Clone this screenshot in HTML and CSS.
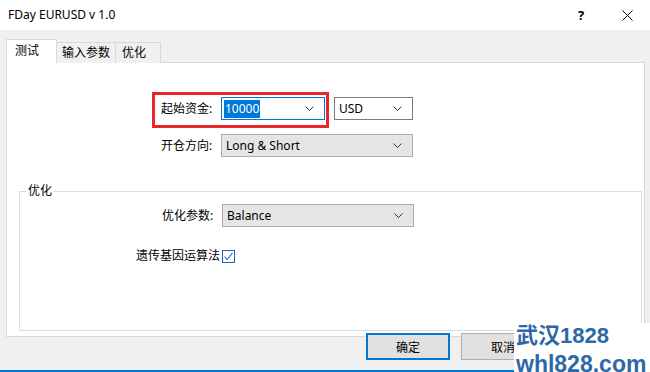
FILE: index.html
```html
<!DOCTYPE html>
<html lang="zh">
<head>
  <meta charset="UTF-8" />
  <meta name="viewport" content="width=device-width, initial-scale=1.0" />
  <title>FDay EURUSD v 1.0</title>
  <link rel="stylesheet" href="styles.css">
</head>
<body>

<header class="titlebar">
  <span class="judul">FDay EURUSD v 1.0</span>
  <span class="spacer"></span>
  <span class="title-btn">?</span>
  <span class="title-btn">
    <svg width="11" height="11" viewBox="0 0 11 11"><path d="M0.5 0.5 L10.5 10.5 M10.5 0.5 L0.5 10.5" stroke="#000" stroke-width="1" fill="none"/></svg>
  </span>
</header>

<main class="dialog">
  <ul class="tabs">
    <li class="tab aktif">测试</li>
    <li class="tab lebar">输入参数</li>
    <li class="tab">优化</li>
  </ul>

  <section class="panel">
    <div class="row row-modal">
      <div class="sorot">
        <span class="label">起始资金:</span>
        <div class="combo fokus w-104">
          <span class="pilih">10000</span>
          <svg class="panah" width="9" height="5" viewBox="0 0 9 5"><path d="M0.5 0.5 L4.5 4.5 L8.5 0.5" stroke="#333" fill="none"/></svg>
        </div>
      </div>
      <div class="combo putih w-79 usd">
        <span>USD</span>
        <svg class="panah" width="9" height="5" viewBox="0 0 9 5"><path d="M0.5 0.5 L4.5 4.5 L8.5 0.5" stroke="#333" fill="none"/></svg>
      </div>
    </div>

    <div class="row row-arah">
      <span class="label">开仓方向:</span>
      <div class="combo w-192">
        <span>Long &amp; Short</span>
        <svg class="panah" width="9" height="5" viewBox="0 0 9 5"><path d="M0.5 0.5 L4.5 4.5 L8.5 0.5" stroke="#333" fill="none"/></svg>
      </div>
    </div>

    <fieldset class="grup">
      <legend>优化</legend>
      <div class="row row-param">
        <span class="label">优化参数:</span>
        <div class="combo w-192">
          <span>Balance</span>
          <svg class="panah" width="9" height="5" viewBox="0 0 9 5"><path d="M0.5 0.5 L4.5 4.5 L8.5 0.5" stroke="#333" fill="none"/></svg>
        </div>
      </div>
      <div class="row row-cek">
        <span>遗传基因运算法</span>
        <span class="cek">
          <svg width="11" height="11" viewBox="0 0 11 11"><path d="M1.5 5.5 L4 8.5 L9.5 2" stroke="#1a66c2" stroke-width="1.1" fill="none"/></svg>
        </span>
      </div>
    </fieldset>
  </section>

  <div class="buttons">
    <button class="default">确定</button>
    <button>取消</button>
  </div>
</main>

<div class="taskbar"></div>

<div class="watermark">
  <span class="wm-atas">武汉1828</span>
  <span class="wm-bawah">whl828.com</span>
</div>

</body>
</html>
```

FILE: styles.css
```css
* {
  box-sizing: border-box;
  margin: 0;
  padding: 0;
}

body {
  width: 650px;
  height: 372px;
  overflow: hidden;
  position: relative;
  display: flex;
  flex-direction: column;
  background-color: #f0f0f0;
  color: #000;
  font-family: "Noto Sans", "Noto Sans CJK SC", sans-serif;
  font-size: 12px;
  line-height: 16px;
}

.titlebar {
  display: flex;
  align-items: center;
  height: 30px;
  background-color: #fff;
  padding-left: 8px;
}

.judul {
  font-size: 12px;
}

.spacer {
  flex: 1;
}

.title-btn {
  width: 46px;
  height: 30px;
  display: flex;
  align-items: center;
  justify-content: center;
  font-size: 13px;
  font-weight: bold;
}

.dialog {
  padding: 9px 5px 0 6px;
}

.tabs {
  list-style: none;
  display: flex;
  align-items: flex-end;
  height: 24px;
  margin-bottom: -1px;
}

.tab {
  height: 21px;
  width: 46px;
  margin-left: -1px;
  padding: 2px 0 0 6px;
  border: 1px solid #d9d9d9;
  border-bottom: none;
  background-color: #f0f0f0;
}

.tab.lebar {
  width: 60px;
  padding-left: 5px;
}

.tab.aktif {
  height: 24px;
  width: 51px;
  margin-left: 0;
  padding: 3px 0 0 8px;
  background-color: #fff;
  position: relative;
  z-index: 1;
}

.panel {
  display: flex;
  flex-direction: column;
  height: 275px;
  border: 1px solid #d9d9d9;
  background-color: #fff;
}

.row {
  display: flex;
  align-items: center;
}

.label {
  width: 60px;
}

.row-modal {
  align-items: flex-start;
  margin-top: 29px;
  padding-left: 145px;
}

.sorot {
  display: flex;
  align-items: center;
  border: 3px solid #e8262b;
  padding: 2px 1px 5px 6px;
}

.usd {
  margin-top: 5px;
  margin-left: 5px;
}

.row-arah {
  margin-top: 6px;
  padding-left: 154px;
}

.combo {
  display: flex;
  align-items: center;
  justify-content: space-between;
  height: 23px;
  padding: 0 10px 0 4px;
  border: 1px solid #adadad;
  background-color: #e5e5e5;
}

.combo.putih {
  background-color: #fff;
  border-color: #7a7a7a;
}

.combo.fokus {
  background-color: #fff;
  border-color: #0078d7;
  padding-left: 2px;
}

.pilih {
  background-color: #0078d7;
  color: #fff;
  line-height: 18px;
  padding: 0 1px;
}

.w-104 { width: 104px; }
.w-79 { width: 79px; }
.w-192 { width: 192px; }

.grup {
  flex: 1;
  margin: 26px 2px 5px 12px;
  padding: 0;
  border: 1px solid #dcdcdc;
}

.grup legend {
  margin-left: 6px;
  padding: 0 2px;
  line-height: 16px;
}

.row-param {
  margin-top: 5px;
  padding-left: 142px;
}

.row-cek {
  margin-top: 21px;
  padding-left: 116px;
  height: 16px;
}

.cek {
  width: 13px;
  height: 13px;
  margin-left: 2px;
  border: 1px solid #1a66c2;
  display: flex;
  align-items: center;
  justify-content: center;
}

.buttons {
  display: flex;
  gap: 11px;
  margin-top: -4px;
  padding-left: 360px;
}

button {
  width: 84px;
  height: 27px;
  border: 1px solid #adadad;
  background-color: #e1e1e1;
  font-family: "Noto Sans", "Noto Sans CJK SC", sans-serif;
  font-size: 12px;
  color: #000;
}

button.default {
  border: 2px solid #0078d7;
}

.taskbar {
  margin-top: auto;
  height: 2px;
  background-color: #0078d7;
}

.watermark {
  position: absolute;
  right: 0;
  bottom: 0;
  width: 136px;
  height: 49px;
  padding: 0 0 0 2px;
  background-color: #fff;
  display: flex;
  flex-direction: column;
  color: #2d68a6;
  font-family: "Liberation Sans", "Noto Sans CJK SC", sans-serif;
  font-weight: bold;
  white-space: nowrap;
}

.wm-atas {
  font-size: 22px;
  line-height: 26px;
}

.wm-bawah {
  font-size: 23px;
  line-height: 30px;
}
```
